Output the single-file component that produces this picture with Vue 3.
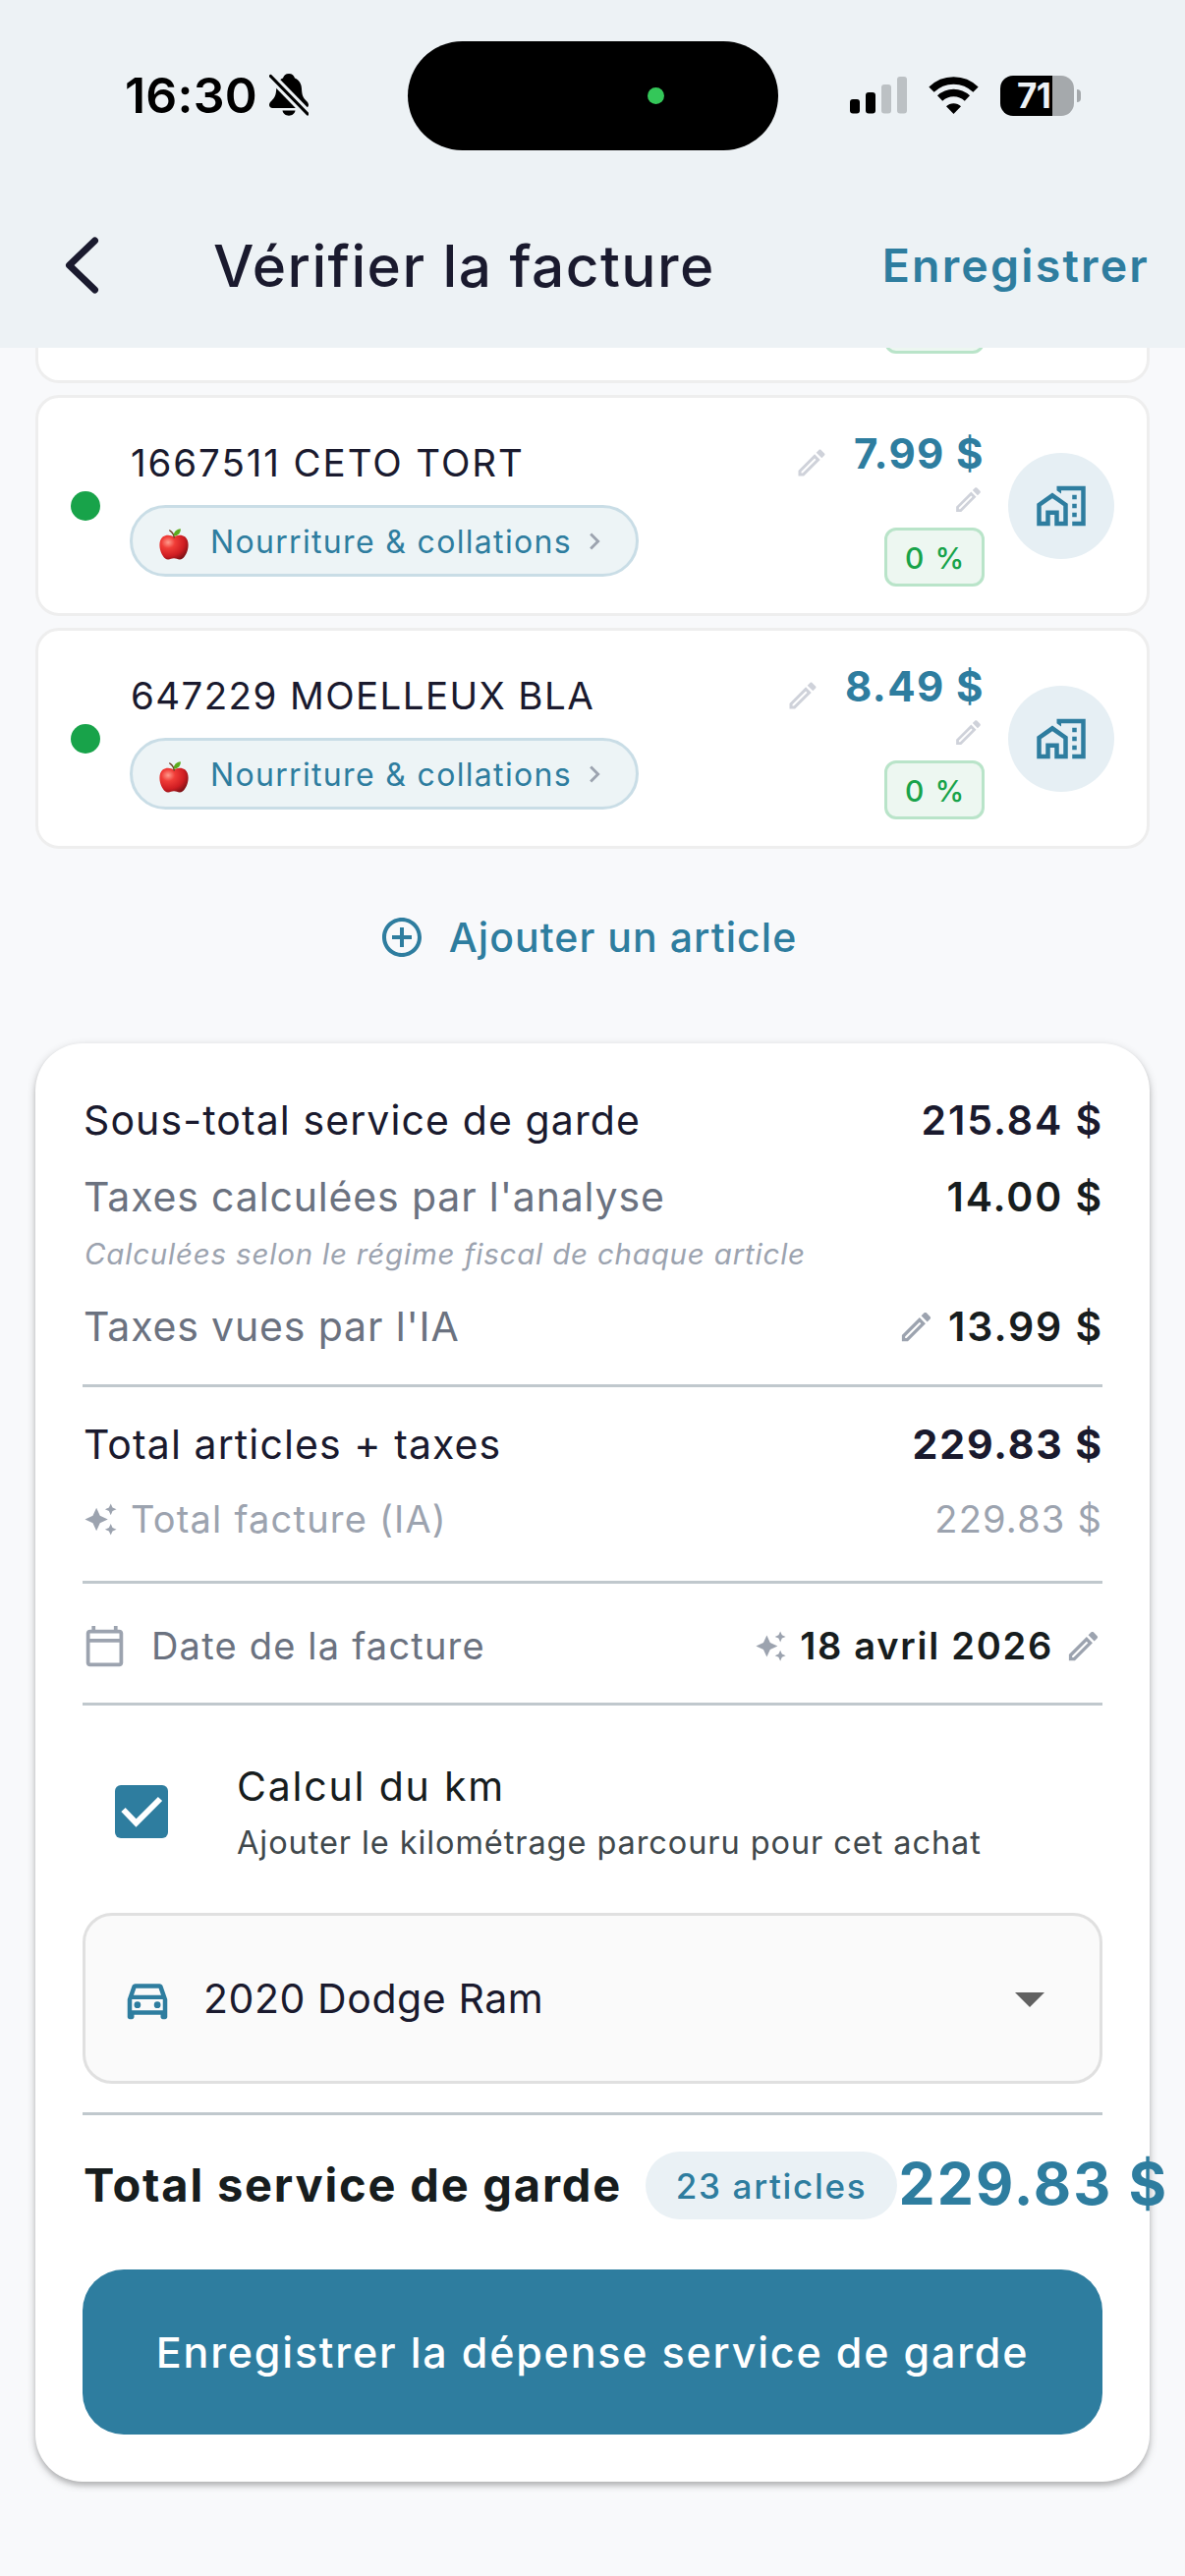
<template>
  <div class="screen">
    <header class="top">
      <div class="status">
        <div class="status-left">
          <span class="clock">16:30</span>
          <svg class="bell" viewBox="0 0 40 44">
            <path d="M20 0c-3.400 0-5.200 2-6 4.600C9.500 6.500 7.400 10.500 7.200 15.500 7 21.500 5.500 24.500 2.500 27.500 1 29 0 30.200 0 31.800 0 33.700 1.300 35 3.500 35h33c2.200 0 3.500-1.300 3.500-3.200 0-1.600-1-2.800-2.500-4.300-3-3-4.300-6-4.500-12C32.800 10.500 30.500 6.500 26 4.600 25.200 2 23.400 0 20 0zM13.500 37.500h13c-.6 3.200-3.200 5.200-6.500 5.200s-5.900-2-6.500-5.200z" />
            <path class="bell-gap" d="M1.500 2.500L39 41" />
            <path class="bell-slash" d="M1.500 2.500L39 41" />
          </svg>
        </div>
        <div class="island"><span class="camera-dot"></span></div>
        <div class="status-right">
          <svg class="signal" viewBox="0 0 58 38">
            <rect x="0" y="23" width="10" height="14.500" rx="3" />
            <rect x="16" y="16" width="10" height="21.500" rx="3" />
            <rect class="off" x="32" y="8" width="10" height="29.500" rx="3" />
            <rect class="off" x="48" y="0" width="10" height="37.500" rx="3" />
          </svg>
          <svg class="wifi" viewBox="0 0 51 38">
            <path class="arc" d="M3 13.200A32 32 0 0 1 48 13.200" />
            <path class="arc" d="M11.600 22A20 20 0 0 1 39.400 22" />
            <path d="M25.500 38L18 30.300a10.600 10.600 0 0 1 15 0z" />
          </svg>
          <div class="battery">
            <div class="battery-body"><span>71</span></div>
            <span class="battery-nub"></span>
          </div>
        </div>
      </div>

      <div class="nav">
        <svg class="back" viewBox="0 0 48 60">
          <path d="M36.500 5L10.500 30l26 25" />
        </svg>
        <h1>Vérifier la facture</h1>
        <button class="save-link">Enregistrer</button>
      </div>
    </header>

    <main>
      <!-- Item scrolled under the header -->
      <div class="item-cut"><span class="badge"></span></div>

      <div v-for="item in items" :key="item.name" class="item">
        <span class="dot"></span>
        <div class="info">
          <div class="info-head">
            <span :class="['name', { wide: item.wide }]">{{ item.name }}</span>
            <svg class="icon edit-36" viewBox="0 0 24 24"><path :d="icons.edit" /></svg>
          </div>
          <div class="category">
            <svg class="apple" viewBox="0 0 30 32">
              <defs>
                <radialGradient id="skin" cx=".3" cy=".3" r=".8">
                  <stop offset="0" stop-color="#ff9a8c" />
                  <stop offset=".3" stop-color="#f03c37" />
                  <stop offset=".7" stop-color="#cf1d22" />
                  <stop offset="1" stop-color="#7d1015" />
                </radialGradient>
              </defs>
              <path fill="url(#skin)" d="M15 8.500C12 6.300 7 5.800 3.800 8.300.2 11-.2 17 1 21.500 2.200 26 5 31.300 9 31.500c2.300.1 3.500-1.200 6-1.200s3.700 1.300 6 1.200c4-.2 6.800-5.500 8-10 1.200-4.500.8-10.500-2.800-13.200C23 5.800 18 6.300 15 8.500z" />
              <path fill="none" stroke="#6b3a20" stroke-width="1.500" stroke-linecap="round" d="M15.200 9C15 6 13 3.500 10.800 2" />
              <path fill="#5cab1e" d="M14.800 7.500C14.500 3.500 17.500.8 21.800.2c.4 4-2.500 7.300-7 7.300z" />
            </svg>
            <span class="category-name">Nourriture &amp; collations</span>
            <svg class="icon chevron" viewBox="0 0 24 24"><path :d="icons.chevron" /></svg>
          </div>
        </div>
        <div class="amounts">
          <span class="price">{{ item.price }}</span>
          <svg class="icon edit-33" viewBox="0 0 24 24"><path :d="icons.edit" /></svg>
          <span class="badge">0 %</span>
        </div>
        <button class="place">
          <svg class="icon" viewBox="0 0 24 24"><path :d="icons.homeWork" /></svg>
        </button>
      </div>

      <button class="add">
        <svg class="icon" viewBox="0 0 24 24"><path :d="icons.add" /></svg>
        <span>Ajouter un article</span>
      </button>

      <section class="summary">
        <div class="row">
          <span class="label dark">Sous-total service de garde</span>
          <span class="value navy">215.84 $</span>
        </div>
        <div class="row">
          <span class="label">Taxes calculées par l'analyse</span>
          <span class="value">14.00 $</span>
        </div>
        <p class="note">Calculées selon le régime fiscal de chaque article</p>
        <div class="row row-seen">
          <span class="label">Taxes vues par l'IA</span>
          <span class="side">
            <svg class="icon edit-39" viewBox="0 0 24 24"><path :d="icons.edit" /></svg>
            <span class="value">13.99 $</span>
          </span>
        </div>
        <hr class="rule-taxes" />

        <div class="row row-total">
          <span class="label dark">Total articles + taxes</span>
          <span class="value navy heavy">229.83 $</span>
        </div>
        <div class="row faint">
          <span class="side">
            <svg class="icon spark-36" viewBox="0 0 24 24"><path :d="icons.sparkles" /></svg>
            <span class="small-label">Total facture (IA)</span>
          </span>
          <span class="small-value">229.83 $</span>
        </div>
        <hr class="rule-total" />

        <div class="row row-date">
          <span class="side">
            <svg class="icon calendar" viewBox="0 0 24 24"><path :d="icons.calendar" /></svg>
            <span class="date-label">Date de la facture</span>
          </span>
          <span class="side">
            <svg class="icon spark-33" viewBox="0 0 24 24"><path :d="icons.sparkles" /></svg>
            <span class="date">18 avril 2026</span>
            <svg class="icon edit-39" viewBox="0 0 24 24"><path :d="icons.edit" /></svg>
          </span>
        </div>
        <hr class="rule-date" />

        <div class="km" @click="withKm = !withKm">
          <span :class="['checkbox', { checked: withKm }]">
            <svg v-if="withKm" viewBox="0 0 54 54"><path d="M8.500 25L21.500 38.500L46 14" /></svg>
          </span>
          <div class="km-text">
            <span class="km-title">Calcul du km</span>
            <span class="km-sub">Ajouter le kilométrage parcouru pour cet achat</span>
          </div>
        </div>

        <div class="vehicle">
          <svg class="icon car" viewBox="0 0 24 24"><path :d="icons.car" /></svg>
          <span>2020 Dodge Ram</span>
          <svg class="icon caret" viewBox="0 0 24 24"><path d="M7 10l5 5 5-5z" /></svg>
        </div>
        <hr class="rule-vehicle" />

        <div class="grand">
          <span class="grand-label">Total service de garde</span>
          <span class="count">23 articles</span>
          <span class="grand-price">229.83 $</span>
        </div>

        <button class="submit">Enregistrer la dépense service de garde</button>
      </section>
    </main>
  </div>
</template>

<script setup>
import { ref } from 'vue'

// Data
const withKm = ref(true)

const items = [
  { name: '1667511 CETO TORT', price: '7.99 $', wide: true },
  { name: '647229 MOELLEUX BLA', price: '8.49 $', wide: false }
]

const icons = {
  edit: 'M14.060 9.020l.92.92L5.920 19H5v-.92l9.060-9.060M17.660 3c-.25 0-.51.1-.7.29l-1.830 1.830 3.750 3.750 1.830-1.830c.39-.39.39-1.020 0-1.410l-2.340-2.340c-.2-.2-.45-.29-.71-.29zm-3.600 3.190L3 17.250V21h3.750L17.810 9.940l-3.750-3.750z',
  sparkles: 'M19 9l1.250-2.750L23 5l-2.750-1.250L19 1l-1.250 2.750L15 5l2.750 1.250L19 9zm-7.500.5L9 4 6.500 9.500 1 12l5.500 2.500L9 20l2.500-5.500L17 12l-5.500-2.500zM19 15l-1.250 2.750L15 19l2.750 1.250L19 23l1.250-2.750L23 19l-2.750-1.250L19 15z',
  calendar: 'M20 3h-1V1h-2v2H7V1H5v2H4c-1.100 0-2 .9-2 2v16c0 1.100.9 2 2 2h16c1.100 0 2-.9 2-2V5c0-1.100-.9-2-2-2zm0 18H4V10h16v11zm0-13H4V5h16v3z',
  add: 'M13 7h-2v4H7v2h4v4h2v-4h4v-2h-4V7zm-1-5C6.480 2 2 6.480 2 12s4.480 10 10 10 10-4.480 10-10S17.520 2 12 2zm0 18c-4.410 0-8-3.590-8-8s3.590-8 8-8 8 3.590 8 8-3.590 8-8 8z',
  chevron: 'M10 6L8.590 7.410 13.170 12l-4.580 4.590L10 18l6-6z',
  homeWork: 'M1 11v10h6v-5h2v5h6V11L8 6l-7 5zm12 8h-2v-5H5v5H3v-7l5-3.500 5 3.500v7zM17 7h2v2h-2zM17 11h2v2h-2zM17 15h2v2h-2zM10 3v1.970l2 1.430V5h9v14h-4v2h6V3H10z',
  car: 'M18.920 6.010C18.720 5.420 18.160 5 17.500 5h-11c-.66 0-1.210.42-1.420 1.010L3 12v8c0 .55.45 1 1 1h1c.55 0 1-.45 1-1v-1h12v1c0 .55.45 1 1 1h1c.55 0 1-.45 1-1v-8l-2.080-5.990zM6.850 7h10.290l1.080 3.110H5.770L6.850 7zM19 17H5v-5h14v5zM6 14.500a1.500 1.500 0 1 0 3 0 1.500 1.500 0 1 0-3 0M15 14.500a1.500 1.500 0 1 0 3 0 1.500 1.500 0 1 0-3 0'
}
</script>

<style>
body {
  margin: 0;
  background: #f8f9fb;
}
</style>

<style scoped>
.screen {
  width: 1206px;
  height: 2622px;
  overflow: hidden;
  background: #f8f9fb;
  color: #171d1e;
  font-family: Inter, "Liberation Sans", sans-serif;
  white-space: nowrap;
}

button {
  padding: 0;
  border: 0;
  background: none;
  color: inherit;
  font: inherit;
  letter-spacing: inherit;
}

svg {
  display: block;
  flex: none;
}

.icon {
  fill: currentColor;
}

/* Header */
.top {
  height: 354px;
  background: #edf2f5;
}

.status {
  display: grid;
  grid-template-columns: 414.5px 377px 1fr;
  align-items: center;
  height: 186px;
  padding-top: 8px;
  box-sizing: border-box;
  color: #000;
}

.status-left {
  display: flex;
  align-items: center;
  gap: 13px;
  padding-left: 127px;
}

.clock {
  width: 134px;
  font-size: 50px;
  font-weight: 600;
  letter-spacing: 0.2px;
}

.bell {
  width: 40px;
  height: 44px;
}

.bell-gap,
.bell-slash {
  fill: none;
  stroke: #edf2f5;
  stroke-width: 9;
}

.bell-slash {
  stroke: #000;
  stroke-width: 3.2;
  stroke-linecap: round;
}

.island {
  display: flex;
  align-items: center;
  justify-content: flex-end;
  height: 111px;
  border-radius: 56px;
  background: #000;
}

.camera-dot {
  width: 17px;
  height: 17px;
  margin-right: 116px;
  border-radius: 50%;
  background: #34c759;
}

.status-right {
  display: flex;
  align-items: center;
  gap: 22px;
  padding-left: 73.5px;
}

.signal {
  width: 58px;
  height: 38px;
}

.off {
  fill: #bcc1c4;
}

.wifi {
  width: 51px;
  height: 38px;
}

.arc {
  fill: none;
  stroke: #000;
  stroke-width: 7.5;
}

.battery {
  display: flex;
  align-items: center;
  gap: 3px;
}

.battery-body {
  width: 75px;
  height: 41px;
  border-radius: 13px;
  background: linear-gradient(90deg, #000 53px, #a5a9ac 53px);
  color: #edf2f5;
  font-size: 35px;
  font-weight: 700;
  line-height: 41px;
  letter-spacing: -0.6px;
  text-indent: 17px;
}

.battery-nub {
  width: 4px;
  height: 13px;
  border-radius: 0 5px 5px 0;
  background: #a5a9ac;
}

.nav {
  display: flex;
  align-items: center;
  height: 168px;
  padding: 0 36px 0 60px;
  color: #1a1a2e;
}

.back {
  width: 48px;
  height: 60px;
}

.back path {
  fill: none;
  stroke: currentColor;
  stroke-width: 7;
  stroke-linecap: round;
  stroke-linejoin: round;
}

h1 {
  flex: 1;
  margin: 0 0 0 109px;
  font-size: 58.5px;
  font-weight: 500;
  letter-spacing: 1.45px;
}

.save-link {
  color: #2e7d9f;
  font-size: 46.5px;
  font-weight: 600;
  letter-spacing: 2.2px;
}

/* Items */
main {
  padding: 0 36px;
}

.item-cut {
  display: flex;
  justify-content: flex-end;
  height: 36px;
  box-sizing: border-box;
  padding-right: 165px;
  overflow: hidden;
  border: 3px solid #eee;
  border-top: 0;
  border-radius: 0 0 24px 24px;
  background: #fff;
}

.item-cut .badge {
  margin-top: -54px;
}

.item {
  display: flex;
  align-items: center;
  height: 225px;
  box-sizing: border-box;
  margin-top: 12px;
  padding: 0 33px;
  border: 3px solid #eee;
  border-radius: 24px;
  background: #fff;
}

.dot {
  width: 30px;
  height: 30px;
  margin-right: 30px;
  border-radius: 50%;
  background: #18a34a;
}

.info {
  flex: 1;
}

.info-head {
  display: flex;
  align-items: center;
  justify-content: space-between;
  height: 58px;
  margin-bottom: 14px;
  color: #cfd2da;
}

.name {
  padding-left: 1px;
  color: #1a1a2e;
  font-size: 38.5px;
  letter-spacing: 1.4px;
}

.wide {
  letter-spacing: 1.9px;
}

.edit-36 {
  width: 36px;
  height: 36px;
}

.category {
  display: flex;
  align-items: center;
  width: 518px;
  height: 73px;
  box-sizing: border-box;
  padding: 0 0 0 27px;
  border: 3px solid #c9dde6;
  border-radius: 37px;
  background: #edf4f6;
  color: #2e7d9f;
}

.apple {
  width: 30px;
  height: 32px;
  margin: 6px 22px 0 0;
}

.category-name {
  width: 374px;
  padding-top: 1px;
  font-size: 32px;
  letter-spacing: 1.33px;
}

.chevron {
  width: 34px;
  height: 34px;
  color: #9ca3af;
}

.amounts {
  display: flex;
  flex-direction: column;
  align-items: flex-end;
  margin-left: 25px;
  color: #cfd2da;
}

.price {
  color: #2e7d9f;
  font-size: 42px;
  font-weight: 700;
  line-height: 60px;
  letter-spacing: 1.4px;
}

.edit-33 {
  width: 33px;
  height: 33px;
}

.badge {
  width: 102px;
  height: 60px;
  box-sizing: border-box;
  margin-top: 12px;
  padding-left: 2px;
  border: 3px solid #b9e4c9;
  border-radius: 12px;
  background: #edf7f1;
  color: #18a34a;
  font-size: 30px;
  font-weight: 500;
  line-height: 56px;
  letter-spacing: 1.6px;
  text-align: center;
}

.place {
  display: flex;
  align-items: center;
  justify-content: center;
  width: 108px;
  height: 108px;
  margin-left: 24px;
  border-radius: 50%;
  background: #e6eff4;
  color: #2e7d9f;
}

.place .icon {
  width: 54px;
  height: 54px;
}

.add {
  display: flex;
  align-items: center;
  justify-content: center;
  gap: 24px;
  width: 100%;
  height: 180px;
  margin-bottom: 18px;
  padding-right: 10px;
  color: #2e7d9f;
  font-size: 41px;
  font-weight: 500;
  letter-spacing: 1.05px;
}

.add .icon {
  width: 48px;
  height: 48px;
}

/* Summary */
.summary {
  height: 1464px;
  box-sizing: border-box;
  padding: 39px 48px 48px;
  border-radius: 48px;
  background: #fff;
  box-shadow: 0 3px 9px rgba(0, 0, 0, 0.24), 0 4px 4px rgba(0, 0, 0, 0.1);
}

.row {
  display: flex;
  align-items: center;
  justify-content: space-between;
  height: 78px;
}

.side {
  display: flex;
  align-items: center;
  color: #9ca3af;
}

.label {
  padding-left: 1px;
  color: #6b7280;
  font-size: 41px;
  letter-spacing: 0.85px;
}

.dark {
  color: #1a1a2e;
  letter-spacing: 1.1px;
}

.value {
  margin-right: -1px;
  color: #171d1e;
  font-size: 41px;
  font-weight: 600;
  letter-spacing: 1.9px;
}

.navy {
  color: #1a1a2e;
}

.heavy {
  font-weight: 700;
}

.note {
  margin: 0;
  padding-left: 2px;
  color: #9ca3af;
  font-size: 29.5px;
  font-style: italic;
  line-height: 38px;
  letter-spacing: 0.8px;
}

.row-seen {
  height: 110px;
}

.edit-39 {
  width: 39px;
  height: 39px;
}

.row-seen .icon {
  margin-right: 13px;
}

hr {
  height: 3px;
  margin: 0;
  border: 0;
  background: #c0c8cd;
}

.rule-taxes {
  margin-top: 4px;
}

.row-total {
  height: 76px;
  margin-top: 20px;
}

.faint {
  height: 76px;
  color: #9ca3af;
}

.spark-36 {
  width: 35px;
  height: 35px;
  margin: 0 13px 0 1px;
}

.small-label,
.small-value {
  font-size: 38px;
  letter-spacing: 1.2px;
}

.rule-total {
  margin-top: 25px;
}

.row-date {
  height: 102px;
  margin-top: 12px;
}

.calendar {
  width: 45px;
  height: 45px;
  margin-right: 25px;
}

.date-label {
  color: #6b7280;
  font-size: 38px;
  letter-spacing: 1.2px;
}

.spark-33 {
  width: 33px;
  height: 33px;
  margin-right: 13px;
}

.date {
  margin-right: 11px;
  color: #171d1e;
  font-size: 38px;
  font-weight: 600;
  letter-spacing: 1.75px;
}

.rule-date {
  margin-top: 7px;
}

.km {
  display: flex;
  align-items: center;
  height: 211px;
  box-sizing: border-box;
  padding: 4px 0 0 33px;
}

.checkbox {
  width: 54px;
  height: 54px;
  margin-right: 70px;
  border-radius: 6px;
  background: #e0e0e0;
}

.checked {
  background: #2e7d9f;
}

.checkbox path {
  fill: none;
  stroke: #fff;
  stroke-width: 6;
}

.km-text {
  display: flex;
  flex-direction: column;
  padding-top: 3px;
}

.km-title {
  font-size: 41px;
  line-height: 61px;
  letter-spacing: 1.8px;
}

.km-sub {
  color: #40484c;
  font-size: 32.5px;
  line-height: 54px;
  letter-spacing: 0.92px;
}

.vehicle {
  display: flex;
  align-items: center;
  height: 174px;
  box-sizing: border-box;
  padding: 0 35px 1px 36px;
  border: 3px solid #e0e0e0;
  border-radius: 30px;
  background: #fafafa;
  color: #1a1a2e;
  font-size: 41px;
  letter-spacing: 0.57px;
}

.vehicle span {
  flex: 1;
}

.car {
  width: 54px;
  height: 54px;
  margin: 2px 30px 0 0;
  color: #2e7d9f;
}

.caret {
  width: 72px;
  height: 72px;
  color: #616161;
}

.rule-vehicle {
  margin-top: 29px;
}

/* The amount is allowed to run past the card's edge */
.grand {
  display: flex;
  align-items: center;
  height: 143px;
}

.grand > span {
  flex: none;
}

.grand-label {
  box-sizing: border-box;
  width: 573px;
  padding: 0 0 2px 1px;
  font-size: 47px;
  font-weight: 700;
  letter-spacing: 1.8px;
}

.count {
  width: 256px;
  height: 69px;
  border-radius: 35px;
  background: #eaf1f5;
  color: #2e7d9f;
  font-size: 35px;
  font-weight: 500;
  line-height: 71px;
  letter-spacing: 1.7px;
  text-align: center;
}

.grand-price {
  padding: 0 0 4px 1.5px;
  color: #2e7d9f;
  font-size: 59px;
  font-weight: 700;
  letter-spacing: 2.1px;
}

.submit {
  width: 100%;
  height: 168px;
  margin-top: 14px;
  border-radius: 42px;
  background: #2e7d9f;
  color: #fff;
  font-size: 43px;
  font-weight: 500;
  letter-spacing: 1.8px;
}
</style>
